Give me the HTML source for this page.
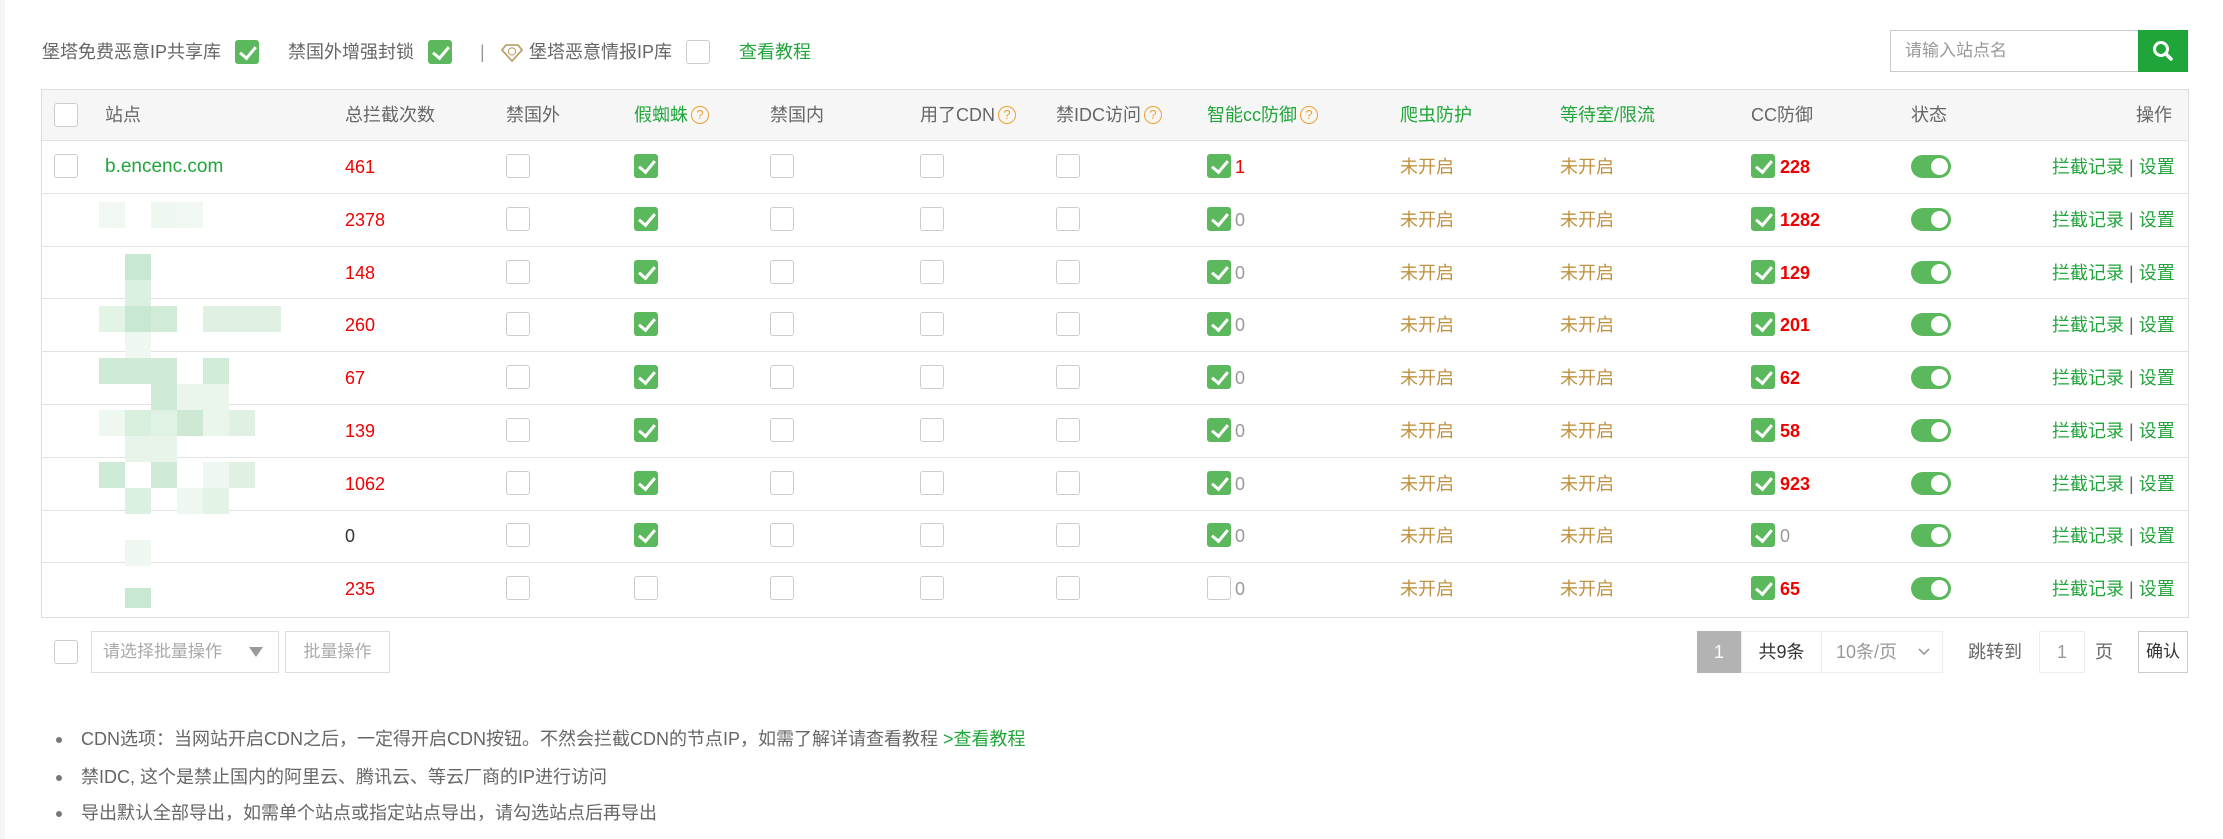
<!DOCTYPE html>
<html><head><meta charset="utf-8"><style>
*{box-sizing:border-box;margin:0;padding:0}
body{width:2223px;height:839px;background:#fff;font-family:"Liberation Sans","Noto Sans CJK SC",sans-serif;font-size:18px;color:#666;position:relative;overflow:hidden}
.a{position:absolute;white-space:nowrap}
.cb{position:absolute;width:24px;height:24px;border:1px solid #ccc;border-radius:3px;background:#fff}
.on{background:#5cb85c;border-color:#5cb85c}
.on::after{content:"";position:absolute;left:7px;top:2px;width:7px;height:13px;border:solid #fff;border-width:0 3px 3px 0;transform:rotate(40deg)}
.g{color:#20a53a}.r{color:#e00}.o{color:#c0913e}.k{color:#333}
.q{display:inline-block;width:18px;height:18px;border:1.5px solid #f0a030;border-radius:50%;color:#f0a030;font-size:13px;line-height:15px;text-align:center;vertical-align:2px;margin-left:3px}
.tg{position:absolute;width:40px;height:23px;border-radius:12px;background:#5cb85c}
.tg::after{content:"";position:absolute;right:3px;top:3px;width:17px;height:17px;border-radius:50%;background:#fff}
.hl{position:absolute;left:42px;width:2146px;height:1px;background:#e2e2e2}
.px{position:absolute;width:26px;height:26px}
.b{font-weight:bold}
.n{font-size:18px;line-height:24px}
</style></head><body>
<div class="a" style="left:0;top:0;width:5px;height:839px;background:#f5f5f5"></div>
<!-- top bar -->
<div class="a" style="left:42px;top:40px;line-height:24px">堡塔免费恶意IP共享库</div>
<div class="cb on" style="left:235px;top:40px"></div>
<div class="a" style="left:288px;top:40px;line-height:24px">禁国外增强封锁</div>
<div class="cb on" style="left:428px;top:40px"></div>
<div class="a" style="left:480px;top:40px;line-height:24px;color:#999">|</div>
<svg class="a" style="left:501px;top:44px" width="22" height="18" viewBox="0 0 22 18"><path d="M5 1H17L21 6L11 17L1 6Z" fill="none" stroke="#b8975a" stroke-width="1.6"/><circle cx="11" cy="7.5" r="3.6" fill="none" stroke="#b8975a" stroke-width="1"/></svg>
<div class="a" style="left:529px;top:40px;line-height:24px">堡塔恶意情报IP库</div>
<div class="cb" style="left:686px;top:40px"></div>
<div class="a g" style="left:739px;top:40px;line-height:24px">查看教程</div>
<div class="a" style="left:1890px;top:30px;width:249px;height:42px;border:1px solid #ccc;border-right:none;padding-left:14px;line-height:40px;color:#999;font-size:17px">请输入站点名</div>
<div class="a" style="left:2138px;top:30px;width:50px;height:42px;background:#20a53a"></div>
<svg class="a" style="left:2151px;top:39px" width="24" height="24" viewBox="0 0 24 24"><circle cx="10" cy="10" r="6.5" fill="none" stroke="#fff" stroke-width="3"/><path d="M14.5 14.5L20 20" stroke="#fff" stroke-width="3.5" stroke-linecap="round"/></svg>
<!-- table -->
<div class="a" style="left:41px;top:89px;width:2148px;height:529px;border:1px solid #ddd"></div>
<div class="a" style="left:42px;top:90px;width:2146px;height:50px;background:#f6f6f6"></div>
<div class="hl" style="top:140px"></div><div class="hl" style="top:193px"></div><div class="hl" style="top:246px"></div><div class="hl" style="top:298px"></div><div class="hl" style="top:351px"></div><div class="hl" style="top:404px"></div><div class="hl" style="top:457px"></div><div class="hl" style="top:510px"></div><div class="hl" style="top:562px"></div>
<!-- header -->
<div class="cb" style="left:54px;top:103px"></div>
<div class="a" style="left:105px;top:103px;line-height:24px">站点</div>
<div class="a" style="left:345px;top:103px;line-height:24px">总拦截次数</div>
<div class="a" style="left:506px;top:103px;line-height:24px">禁国外</div>
<div class="a g" style="left:634px;top:103px;line-height:24px">假蜘蛛<span class="q">?</span></div>
<div class="a" style="left:770px;top:103px;line-height:24px">禁国内</div>
<div class="a" style="left:920px;top:103px;line-height:24px">用了CDN<span class="q">?</span></div>
<div class="a" style="left:1056px;top:103px;line-height:24px">禁IDC访问<span class="q">?</span></div>
<div class="a g" style="left:1207px;top:103px;line-height:24px">智能cc防御<span class="q">?</span></div>
<div class="a g" style="left:1400px;top:103px;line-height:24px">爬虫防护</div>
<div class="a g" style="left:1560px;top:103px;line-height:24px">等待室/限流</div>
<div class="a" style="left:1751px;top:103px;line-height:24px">CC防御</div>
<div class="a" style="left:1911px;top:103px;line-height:24px">状态</div>
<div class="a" style="left:2136px;top:103px;line-height:24px">操作</div>
<!-- blurred names -->
<div class="px" style="left:99px;top:202px;background:#f1f8f2"></div><div class="px" style="left:151px;top:202px;background:#eef7f0"></div><div class="px" style="left:177px;top:202px;background:#f1f8f2"></div>
<div class="px" style="left:125px;top:254px;background:#c9e8d1"></div><div class="px" style="left:125px;top:280px;background:#dcf0e1"></div>
<div class="px" style="left:99px;top:306px;background:#e3f3e6"></div><div class="px" style="left:125px;top:306px;background:#c9e8d1"></div><div class="px" style="left:151px;top:306px;background:#d0ebd6"></div><div class="px" style="left:203px;top:306px;width:78px;background:#e0f1e4"></div>
<div class="px" style="left:125px;top:332px;background:#eef7f0"></div>
<div class="px" style="left:99px;top:358px;width:78px;background:#cfead6"></div><div class="px" style="left:203px;top:358px;background:#d0ebd6"></div>
<div class="px" style="left:151px;top:384px;background:#cfead6"></div><div class="px" style="left:177px;top:384px;width:52px;background:#eaf6ec"></div>
<div class="px" style="left:99px;top:410px;background:#eef7f0"></div><div class="px" style="left:125px;top:410px;background:#d8efdd"></div><div class="px" style="left:151px;top:410px;background:#dff2e3"></div><div class="px" style="left:177px;top:410px;background:#cde9d4"></div><div class="px" style="left:203px;top:410px;background:#eaf6ec"></div><div class="px" style="left:229px;top:410px;background:#e0f0e3"></div>
<div class="px" style="left:125px;top:436px;width:52px;background:#e6f4e9"></div>
<div class="px" style="left:99px;top:462px;background:#cfead6"></div><div class="px" style="left:151px;top:462px;background:#cfead6"></div><div class="px" style="left:203px;top:462px;background:#eef7f0"></div><div class="px" style="left:229px;top:462px;background:#e0f1e4"></div>
<div class="px" style="left:125px;top:488px;background:#dcf0e1"></div><div class="px" style="left:177px;top:488px;background:#eef7f0"></div><div class="px" style="left:203px;top:488px;background:#e3f3e6"></div>
<div class="px" style="left:125px;top:540px;background:#eef7f0"></div>
<div class="px" style="left:125px;top:588px;height:20px;background:#c9e8d1"></div>

<!-- row 1 -->
<div class="cb" style="left:54px;top:154px"></div>
<div class="a g" style="left:105px;top:155px;line-height:24px;font-size:19px">b.encenc.com</div>
<div class="a r" style="left:345px;top:155px;line-height:24px">461</div>
<div class="cb" style="left:506px;top:154px"></div><div class="cb on" style="left:634px;top:154px"></div><div class="cb" style="left:770px;top:154px"></div><div class="cb" style="left:920px;top:154px"></div><div class="cb" style="left:1056px;top:154px"></div>
<div class="cb on" style="left:1207px;top:154px"></div><div class="a r" style="left:1235px;top:155px;line-height:24px">1</div>
<div class="a o" style="left:1400px;top:155px;line-height:24px">未开启</div><div class="a o" style="left:1560px;top:155px;line-height:24px">未开启</div>
<div class="cb on" style="left:1751px;top:154px"></div><div class="a r b" style="left:1780px;top:155px;line-height:24px">228</div>
<div class="tg" style="left:1911px;top:155px"></div>
<div class="a g" style="left:2052px;top:155px;line-height:24px">拦截记录 <span style="color:#666">|</span> 设置</div>
<!-- row 2 -->
<div class="a r" style="left:345px;top:208px;line-height:24px">2378</div>
<div class="cb" style="left:506px;top:207px"></div><div class="cb on" style="left:634px;top:207px"></div><div class="cb" style="left:770px;top:207px"></div><div class="cb" style="left:920px;top:207px"></div><div class="cb" style="left:1056px;top:207px"></div>
<div class="cb on" style="left:1207px;top:207px"></div><div class="a" style="left:1235px;top:208px;line-height:24px;color:#999">0</div>
<div class="a o" style="left:1400px;top:208px;line-height:24px">未开启</div><div class="a o" style="left:1560px;top:208px;line-height:24px">未开启</div>
<div class="cb on" style="left:1751px;top:207px"></div><div class="a r b" style="left:1780px;top:208px;line-height:24px">1282</div>
<div class="tg" style="left:1911px;top:208px"></div>
<div class="a g" style="left:2052px;top:208px;line-height:24px">拦截记录 <span style="color:#666">|</span> 设置</div>
<!-- row 3 -->
<div class="a r" style="left:345px;top:261px;line-height:24px">148</div>
<div class="cb" style="left:506px;top:260px"></div><div class="cb on" style="left:634px;top:260px"></div><div class="cb" style="left:770px;top:260px"></div><div class="cb" style="left:920px;top:260px"></div><div class="cb" style="left:1056px;top:260px"></div>
<div class="cb on" style="left:1207px;top:260px"></div><div class="a" style="left:1235px;top:261px;line-height:24px;color:#999">0</div>
<div class="a o" style="left:1400px;top:261px;line-height:24px">未开启</div><div class="a o" style="left:1560px;top:261px;line-height:24px">未开启</div>
<div class="cb on" style="left:1751px;top:260px"></div><div class="a r b" style="left:1780px;top:261px;line-height:24px">129</div>
<div class="tg" style="left:1911px;top:261px"></div>
<div class="a g" style="left:2052px;top:261px;line-height:24px">拦截记录 <span style="color:#666">|</span> 设置</div>
<!-- row 4 -->
<div class="a r" style="left:345px;top:313px;line-height:24px">260</div>
<div class="cb" style="left:506px;top:312px"></div><div class="cb on" style="left:634px;top:312px"></div><div class="cb" style="left:770px;top:312px"></div><div class="cb" style="left:920px;top:312px"></div><div class="cb" style="left:1056px;top:312px"></div>
<div class="cb on" style="left:1207px;top:312px"></div><div class="a" style="left:1235px;top:313px;line-height:24px;color:#999">0</div>
<div class="a o" style="left:1400px;top:313px;line-height:24px">未开启</div><div class="a o" style="left:1560px;top:313px;line-height:24px">未开启</div>
<div class="cb on" style="left:1751px;top:312px"></div><div class="a r b" style="left:1780px;top:313px;line-height:24px">201</div>
<div class="tg" style="left:1911px;top:313px"></div>
<div class="a g" style="left:2052px;top:313px;line-height:24px">拦截记录 <span style="color:#666">|</span> 设置</div>
<!-- row 5 -->
<div class="a r" style="left:345px;top:366px;line-height:24px">67</div>
<div class="cb" style="left:506px;top:365px"></div><div class="cb on" style="left:634px;top:365px"></div><div class="cb" style="left:770px;top:365px"></div><div class="cb" style="left:920px;top:365px"></div><div class="cb" style="left:1056px;top:365px"></div>
<div class="cb on" style="left:1207px;top:365px"></div><div class="a" style="left:1235px;top:366px;line-height:24px;color:#999">0</div>
<div class="a o" style="left:1400px;top:366px;line-height:24px">未开启</div><div class="a o" style="left:1560px;top:366px;line-height:24px">未开启</div>
<div class="cb on" style="left:1751px;top:365px"></div><div class="a r b" style="left:1780px;top:366px;line-height:24px">62</div>
<div class="tg" style="left:1911px;top:366px"></div>
<div class="a g" style="left:2052px;top:366px;line-height:24px">拦截记录 <span style="color:#666">|</span> 设置</div>
<!-- row 6 -->
<div class="a r" style="left:345px;top:419px;line-height:24px">139</div>
<div class="cb" style="left:506px;top:418px"></div><div class="cb on" style="left:634px;top:418px"></div><div class="cb" style="left:770px;top:418px"></div><div class="cb" style="left:920px;top:418px"></div><div class="cb" style="left:1056px;top:418px"></div>
<div class="cb on" style="left:1207px;top:418px"></div><div class="a" style="left:1235px;top:419px;line-height:24px;color:#999">0</div>
<div class="a o" style="left:1400px;top:419px;line-height:24px">未开启</div><div class="a o" style="left:1560px;top:419px;line-height:24px">未开启</div>
<div class="cb on" style="left:1751px;top:418px"></div><div class="a r b" style="left:1780px;top:419px;line-height:24px">58</div>
<div class="tg" style="left:1911px;top:419px"></div>
<div class="a g" style="left:2052px;top:419px;line-height:24px">拦截记录 <span style="color:#666">|</span> 设置</div>
<!-- row 7 -->
<div class="a r" style="left:345px;top:472px;line-height:24px">1062</div>
<div class="cb" style="left:506px;top:471px"></div><div class="cb on" style="left:634px;top:471px"></div><div class="cb" style="left:770px;top:471px"></div><div class="cb" style="left:920px;top:471px"></div><div class="cb" style="left:1056px;top:471px"></div>
<div class="cb on" style="left:1207px;top:471px"></div><div class="a" style="left:1235px;top:472px;line-height:24px;color:#999">0</div>
<div class="a o" style="left:1400px;top:472px;line-height:24px">未开启</div><div class="a o" style="left:1560px;top:472px;line-height:24px">未开启</div>
<div class="cb on" style="left:1751px;top:471px"></div><div class="a r b" style="left:1780px;top:472px;line-height:24px">923</div>
<div class="tg" style="left:1911px;top:472px"></div>
<div class="a g" style="left:2052px;top:472px;line-height:24px">拦截记录 <span style="color:#666">|</span> 设置</div>
<!-- row 8 -->
<div class="a k" style="left:345px;top:524px;line-height:24px">0</div>
<div class="cb" style="left:506px;top:523px"></div><div class="cb on" style="left:634px;top:523px"></div><div class="cb" style="left:770px;top:523px"></div><div class="cb" style="left:920px;top:523px"></div><div class="cb" style="left:1056px;top:523px"></div>
<div class="cb on" style="left:1207px;top:523px"></div><div class="a" style="left:1235px;top:524px;line-height:24px;color:#999">0</div>
<div class="a o" style="left:1400px;top:524px;line-height:24px">未开启</div><div class="a o" style="left:1560px;top:524px;line-height:24px">未开启</div>
<div class="cb on" style="left:1751px;top:523px"></div><div class="a" style="left:1780px;top:524px;line-height:24px;color:#999">0</div>
<div class="tg" style="left:1911px;top:524px"></div>
<div class="a g" style="left:2052px;top:524px;line-height:24px">拦截记录 <span style="color:#666">|</span> 设置</div>
<!-- row 9 -->
<div class="a r" style="left:345px;top:577px;line-height:24px">235</div>
<div class="cb" style="left:506px;top:576px"></div><div class="cb" style="left:634px;top:576px"></div><div class="cb" style="left:770px;top:576px"></div><div class="cb" style="left:920px;top:576px"></div><div class="cb" style="left:1056px;top:576px"></div>
<div class="cb" style="left:1207px;top:576px"></div><div class="a" style="left:1235px;top:577px;line-height:24px;color:#999">0</div>
<div class="a o" style="left:1400px;top:577px;line-height:24px">未开启</div><div class="a o" style="left:1560px;top:577px;line-height:24px">未开启</div>
<div class="cb on" style="left:1751px;top:576px"></div><div class="a r b" style="left:1780px;top:577px;line-height:24px">65</div>
<div class="tg" style="left:1911px;top:577px"></div>
<div class="a g" style="left:2052px;top:577px;line-height:24px">拦截记录 <span style="color:#666">|</span> 设置</div>
<!-- footer -->
<div class="cb" style="left:54px;top:640px"></div>
<div class="a" style="left:91px;top:631px;width:188px;height:42px;border:1px solid #ddd;padding-left:11px;line-height:40px;color:#aaa;font-size:17px">请选择批量操作</div>
<svg class="a" style="left:248px;top:646px" width="16" height="12" viewBox="0 0 16 12"><path d="M1 1H15L8 11Z" fill="#999"/></svg>
<div class="a" style="left:285px;top:631px;width:105px;height:42px;border:1px solid #ddd;text-align:center;line-height:40px;color:#aaa;font-size:17px">批量操作</div>
<div class="a" style="left:1697px;top:631px;width:44px;height:42px;background:#b3b3b3;color:#fff;text-align:center;line-height:42px">1</div>
<div class="a" style="left:1741px;top:631px;width:81px;height:42px;border:1px solid #eee;text-align:center;line-height:40px;color:#333">共9条</div>
<div class="a" style="left:1821px;top:631px;width:122px;height:42px;border:1px solid #eee;padding-left:14px;line-height:40px;color:#999">10条/页</div>
<svg class="a" style="left:1917px;top:647px" width="14" height="10" viewBox="0 0 14 10"><path d="M2 2L7 7L12 2" fill="none" stroke="#999" stroke-width="1.6"/></svg>
<div class="a" style="left:1968px;top:631px;line-height:42px">跳转到</div>
<div class="a" style="left:2039px;top:631px;width:46px;height:42px;border:1px solid #eee;text-align:center;line-height:40px;color:#999">1</div>
<div class="a" style="left:2095px;top:631px;line-height:42px">页</div>
<div class="a" style="left:2138px;top:631px;width:50px;height:42px;border:1px solid #ccc;text-align:center;line-height:40px;color:#333;font-size:17px">确认</div>
<!-- notes -->
<div class="a" style="left:56px;top:737px;width:6px;height:6px;border-radius:50%;background:#777"></div>
<div class="a n" style="left:81px;top:727px">CDN选项：当网站开启CDN之后，一定得开启CDN按钮。不然会拦截CDN的节点IP，如需了解详请查看教程 <span class="g">&gt;查看教程</span></div>
<div class="a" style="left:56px;top:775px;width:6px;height:6px;border-radius:50%;background:#777"></div>
<div class="a n" style="left:81px;top:765px">禁IDC, 这个是禁止国内的阿里云、腾讯云、等云厂商的IP进行访问</div>
<div class="a" style="left:56px;top:811px;width:6px;height:6px;border-radius:50%;background:#777"></div>
<div class="a n" style="left:81px;top:801px">导出默认全部导出，如需单个站点或指定站点导出，请勾选站点后再导出</div>
</body></html>
